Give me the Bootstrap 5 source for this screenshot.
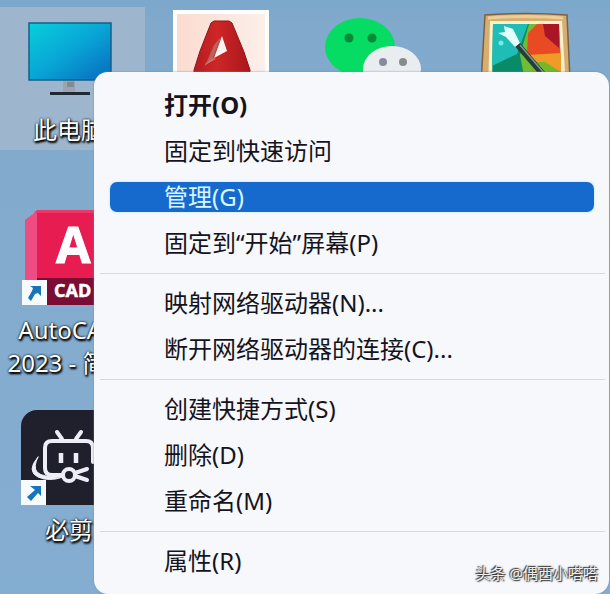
<!DOCTYPE html>
<html lang="zh-CN">
<head>
<meta charset="utf-8">
<meta name="viewport" content="width=device-width, initial-scale=1">
<title>桌面</title>
<link href="https://cdn.jsdelivr.net/npm/bootstrap@5.3.0/dist/css/bootstrap.min.css" rel="stylesheet">
<style>
body { font-family: "Noto Sans", "Noto Sans CJK SC", sans-serif; color: #15131c; }
.desktop { background: linear-gradient(#7ba8cc, #80a9cb 20px, #84accf 60%, #84add2); }
.tiles { display: grid; grid-template-columns: repeat(auto-fill, 152px); grid-auto-rows: 184px; row-gap: 16px; margin: 7px -7px 0; }
.tile { color: #fff; line-height: 33px; text-shadow: 0 0 2px #000, 1px 2px 2px #000, 1px 1px 3px #111; font-size: 24px; padding: 2px 8px 0; }
.tile.selected { background: #9db6ce; height: 143px; }
.tile svg { width: 96px; height: 96px; margin-bottom: 8px; }
.tile svg text { text-shadow: none; }
.ctx { left: 94px; right: 1px; top: 72px; padding: 10px 0; background: #f6f8fc; border-radius: 14px; box-shadow: 0 0 2px #6a89a8; }
.ctx-item { margin: 8px 15px 8px 16px; padding: 0 0 0 54px; font-size: 24px; line-height: 30px; border-radius: 7px; color: inherit; }
.ctx-item:hover, .ctx-item.current { background: #176acd; color: #d9f6ff; box-shadow: 0 0 2px 1px #d5effc; }
.ctx-line { margin: 7px 4px 6px 6px; height: 1px; background: #d5dae1; }
.byline { right: 12px; bottom: 8px; font-size: 15px; line-height: 26px; color: #f0f0f0; text-shadow: -1px -1px 1px #333, 1px 1px 1px #333, 0 0 3px #777; }
</style>
<script src="https://cdn.jsdelivr.net/npm/bootstrap@5.3.0/dist/js/bootstrap.bundle.min.js"></script>
</head>
<body>
<main class="desktop position-relative min-vh-100 overflow-hidden">
  <div class="tiles">
    <button type="button" class="tile selected btn border-0 rounded-0 d-flex flex-column align-items-center">
      <svg viewBox="0 0 96 96" aria-hidden="true">
        <defs><linearGradient id="screen" x1="0" y1="0" x2="1" y2="1"><stop offset="0" stop-color="#08cfda"/><stop offset=".5" stop-color="#08a5d6"/><stop offset="1" stop-color="#0869bd"/></linearGradient></defs>
        <path fill="#9aa5af" d="M42 71h12v14H42z"/><path fill="#7f8b96" d="M46 73h7v5h-7z"/>
        <path fill="#202a34" d="M29 83h40v3H29z"/>
        <path fill="url(#screen)" stroke="#14608a" stroke-width="1.5" d="M8 14h82v57H8z"/>
      </svg>
      <span>此电脑</span>
    </button>
    <button type="button" class="tile btn border-0 d-flex flex-column align-items-center" aria-label="AutoCAD">
      <svg viewBox="0 0 96 96" aria-hidden="true">
        <defs><linearGradient id="redA" x1="0" x2="1"><stop offset="0" stop-color="#b51c1f"/><stop offset=".4" stop-color="#cf2626"/><stop offset="1" stop-color="#a9171b"/></linearGradient><linearGradient id="paper" x1="0" x2="1"><stop offset="0" stop-color="#fbdcd0"/><stop offset="1" stop-color="#fcefe9"/></linearGradient></defs>
        <path fill="#fff" d="M0 1h96v95H0z"/><path fill="url(#paper)" d="M4 5h88v87H4z"/>
        <path fill="url(#redA)" stroke="#8f1519" d="M41 12h15l3 2 12 29 6 18v20H21V61l6-19 11-28z"/>
        <path fill="#fff3ef" d="m49 27 5 15-13 7z"/><path fill="#b8635c" d="m48 28-8 21-8 8 9-21z"/><path fill="#d8736b" d="m32 55 8-6 3 1-11 6z"/>
      </svg>
    </button>
    <button type="button" class="tile btn border-0 d-flex flex-column align-items-center" aria-label="微信">
      <svg viewBox="0 0 96 96" aria-hidden="true">
        <ellipse cx="35" cy="38" rx="35" ry="29" fill="#06db64"/>
        <circle cx="24" cy="29" r="4.5" fill="#078b36"/><circle cx="47" cy="29" r="4.5" fill="#078b36"/>
        <ellipse cx="67" cy="60" rx="29" ry="23" fill="#e9edf0"/>
        <circle cx="58" cy="53" r="4" fill="#868c9e"/><circle cx="78" cy="53" r="4" fill="#868b8c"/>
      </svg>
    </button>
    <button type="button" class="tile btn border-0 d-flex flex-column align-items-center" aria-label="图片工具">
      <svg viewBox="0 0 96 96" aria-hidden="true">
        <path fill="#d7ae70" stroke="#796044" stroke-width="1.5" d="M8 6q42-3 82 0l4 86H3z"/>
        <path fill="none" stroke="#edce98" stroke-width="3" d="M11 9q39-3 75 0"/>
        <path fill="#fbf1ca" d="M13 12h72l4 70H11z"/>
        <path fill="#098b68" d="M16 15h66l2 62H15z"/>
        <path fill="#1fbdb6" d="M16 15h35L40 45 15 57z"/><path fill="#70bd33" d="m52 15-9 31 6 31h15l-3-62z"/>
        <path fill="#e84b24" d="M60 15h22l2 38-34-6 1-23z"/><path fill="#a81627" d="M66 15h16v24L68 27z"/>
        <path fill="#ef9b28" d="m50 46 34-2v19l-20 1z"/><path fill="#77b628" d="M54 53h14l16 10v14H54z"/>
        <path stroke="#243d3a" stroke-width="6" d="m40 35 36 42"/><path stroke="#809b8b" stroke-width="1.5" d="m43 36 35 41"/>
        <path fill="#e5ffff" d="m27 17 9 3 7 14-5 4-9-10-8-4 7-1z"/><circle cx="24" cy="34" r="2.5" fill="#74ebe3"/>
      </svg>
    </button>
    <button type="button" class="tile btn border-0 d-flex flex-column align-items-center" style="grid-column:1">
      <svg viewBox="0 0 96 96" aria-hidden="true">
        <path fill="#ed4d83" d="m4 11 12-9v74H4z"/><path fill="#e71d51" d="M16 1h76v68H16z"/><path fill="#ea3968" d="M16 1h76v3H13z"/>
        <path fill="#7b0d35" d="M16 69h76v27H16z"/>
        <g fill="#fff" font-family="Open Sans, sans-serif" font-weight="700"><text x="35" y="54" font-size="50" stroke="#fff">A</text><text x="33" y="88" font-size="18" stroke="#fff" stroke-width=".5">CAD</text></g>
        <path fill="#f7faff" d="M1 71h25v25H1z"/><path fill="#1675b6" d="M9 77h11v10l-3-3-3 1-4 7-3-3 4-7 1-3z"/>
      </svg>
      <span>AutoCAD<br>2023 - 简体</span>
    </button>
    <button type="button" class="tile btn border-0 d-flex flex-column align-items-center" style="grid-column:1">
      <svg viewBox="0 0 96 96" aria-hidden="true">
        <rect y="1" width="96" height="95" rx="16" fill="#201f2c"/>
        <g fill="none" stroke="#eeedf5" stroke-width="4" stroke-linecap="round"><path d="m36 23 5 7m19-7-5 7"/><path d="M41 66H31q-7 0-7-7V39q0-7 7-7h34q7 0 7 7v14"/><path stroke-width="4.5" stroke-linecap="butt" d="M40 44v10m15-10v10"/><path fill="#eeedf5" stroke-width="1" d="M17 48Q5 62 17 68q11 5 25 0-20 1-26-5-4-5 1-15z"/><circle cx="48" cy="66" r="6"/><path d="m54 64 12-4m-12 7 12 4"/></g>
        <path fill="#f7faff" d="M0 71h25v25H0z"/><path fill="#1675b6" d="M9 77h11v10l-3-3-7 8-4-4 8-7z"/>
      </svg>
      <span>必剪</span>
    </button>
  </div>

  <div class="ctx position-absolute d-flex flex-column" role="menu">
    <button type="button" role="menuitem" class="ctx-item btn border-0 text-start fw-bold">打开(O)</button>
    <button type="button" role="menuitem" class="ctx-item btn border-0 text-start">固定到快速访问</button>
    <button type="button" role="menuitem" class="ctx-item btn border-0 text-start current">管理(G)</button>
    <button type="button" role="menuitem" class="ctx-item btn border-0 text-start">固定到“开始”屏幕(P)</button>
    <div class="ctx-line" role="separator"></div>
    <button type="button" role="menuitem" class="ctx-item btn border-0 text-start">映射网络驱动器(N)...</button>
    <button type="button" role="menuitem" class="ctx-item btn border-0 text-start">断开网络驱动器的连接(C)...</button>
    <div class="ctx-line" role="separator"></div>
    <button type="button" role="menuitem" class="ctx-item btn border-0 text-start">创建快捷方式(S)</button>
    <button type="button" role="menuitem" class="ctx-item btn border-0 text-start">删除(D)</button>
    <button type="button" role="menuitem" class="ctx-item btn border-0 text-start">重命名(M)</button>
    <div class="ctx-line" role="separator"></div>
    <button type="button" role="menuitem" class="ctx-item btn border-0 text-start">属性(R)</button>
  </div>
  <div class="byline position-absolute">头条 @偶西小嗒嗒</div>
</main>
</body>
</html>
